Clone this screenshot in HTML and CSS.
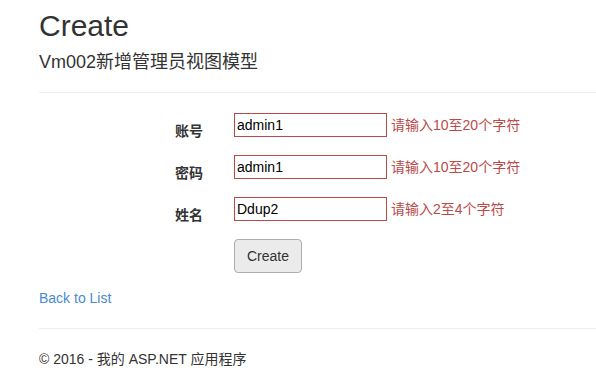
FILE: index.html
```html
<!DOCTYPE html>
<html lang="zh">
<head>
<meta charset="utf-8">
<title>Create</title>
<link rel="stylesheet" href="styles.css">
</head>
<body>
<div class="container">
  <h2 class="title">Create</h2>
  <form class="form">
    <h4 class="subtitle">Vm002新增管理员视图模型</h4>
    <hr class="rule">
    <div class="form-group">
      <label class="control-label">账号</label>
      <div class="field">
        <input class="text-input" type="text" value="admin1">
        <span class="field-error">请输入10至20个字符</span>
      </div>
    </div>
    <div class="form-group">
      <label class="control-label">密码</label>
      <div class="field">
        <input class="text-input" type="text" value="admin1">
        <span class="field-error">请输入10至20个字符</span>
      </div>
    </div>
    <div class="form-group">
      <label class="control-label">姓名</label>
      <div class="field">
        <input class="text-input" type="text" value="Ddup2">
        <span class="field-error">请输入2至4个字符</span>
      </div>
    </div>
    <div class="form-group">
      <span class="control-label"></span>
      <div class="field">
        <button class="btn" type="button">Create</button>
      </div>
    </div>
  </form>
  <div class="back"><a href="#" class="link">Back to List</a></div>
  <hr class="rule footer-rule">
  <footer class="footer"><p class="footer-text">© 2016 - 我的 ASP.NET 应用程序</p></footer>
</div>
</body>
</html>
```

FILE: styles.css
```css
* { box-sizing: border-box; }
html, body { margin: 0; padding: 0; background: #fff; }
body {
  font-family: "Liberation Sans", Arial, "Noto Sans CJK SC", sans-serif;
  font-size: 14px;
  line-height: 20px;
  color: #333;
}
.container { padding: 9px 0 0 39px; }
.title {
  margin: 0 0 10px;
  font-size: 30px;
  line-height: 33px;
  font-weight: 400;
}
.form { margin: 0; }
.subtitle {
  margin: 10px 0 10px;
  font-size: 18px;
  line-height: 20px;
  font-weight: 400;
}
.rule {
  margin: 20px 0;
  border: 0;
  border-top: 1px solid #eee;
  height: 0;
}
.form-group {
  display: grid;
  grid-template-columns: 164px 1fr;
  column-gap: 31px;
  margin-bottom: 15px;
  min-height: 27px;
}
.control-label {
  padding-top: 7px;
  text-align: right;
  font-weight: bold;
  font-family: "Noto Sans CJK SC", sans-serif;
  font-size: 14px;
  line-height: 20px;
}
.field { display: flex; align-items: flex-start; }
.text-input {
  width: 153px;
  height: 24px;
  border: 1px solid #b94a48;
  padding: 0 2px;
  font-family: "Liberation Sans", Arial, sans-serif;
  font-size: 14px;
  color: #000;
  background: #fff;
  outline: none;
}
.field-error {
  margin-left: 4px;
  color: #b94a48;
  font-size: 14px;
  line-height: 24px;
}
.btn {
  height: 34px;
  padding: 6px 12px;
  font-family: "Liberation Sans", Arial, sans-serif;
  font-size: 14px;
  line-height: 20px;
  color: #333;
  background: #ebebeb;
  border: 1px solid #adadad;
  border-radius: 4px;
}
.back { line-height: 20px; }
.link { color: #4a8ad0; text-decoration: none; }
.footer-rule { margin-top: 20px; }
.footer-text { margin: 0; }
```
